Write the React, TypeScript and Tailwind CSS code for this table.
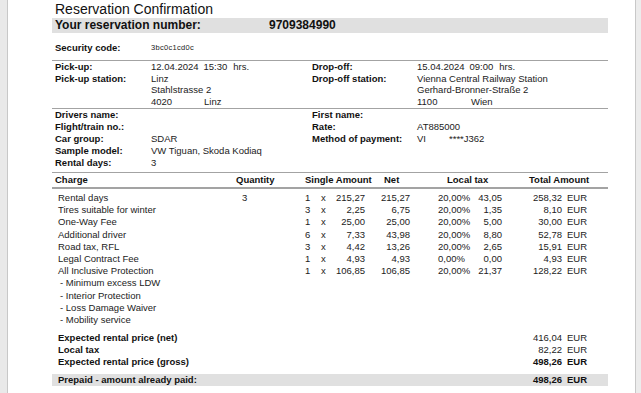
import React from 'react';

const pickup = {
  date: '12.04.2024',
  time: '15:30',
  station: 'Linz',
  street: 'Stahlstrasse 2',
  zip: '4020',
  city: 'Linz',
};

const dropoff = {
  date: '15.04.2024',
  time: '09:00',
  station: 'Vienna Central Railway Station',
  street: 'Gerhard-Bronner-Straße 2',
  zip: '1100',
  city: 'Wien',
};

const charges = [
  { name: 'Rental days', qty: '3', count: '1', single: '215,27', net: '215,27', pct: '20,00%', tax: '43,05', total: '258,32' },
  { name: 'Tires suitable for winter', qty: '', count: '3', single: '2,25', net: '6,75', pct: '20,00%', tax: '1,35', total: '8,10' },
  { name: 'One-Way Fee', qty: '', count: '1', single: '25,00', net: '25,00', pct: '20,00%', tax: '5,00', total: '30,00' },
  { name: 'Additional driver', qty: '', count: '6', single: '7,33', net: '43,98', pct: '20,00%', tax: '8,80', total: '52,78' },
  { name: 'Road tax, RFL', qty: '', count: '3', single: '4,42', net: '13,26', pct: '20,00%', tax: '2,65', total: '15,91' },
  { name: 'Legal Contract Fee', qty: '', count: '1', single: '4,93', net: '4,93', pct: '0,00%', tax: '0,00', total: '4,93' },
  { name: 'All Inclusive Protection', qty: '', count: '1', single: '106,85', net: '106,85', pct: '20,00%', tax: '21,37', total: '128,22' },
];

const protections = ['Minimum excess LDW', 'Interior Protection', 'Loss Damage Waiver', 'Mobility service'];

function Rule() {
  return <div className="h-[1.5px] bg-[#a3a3a3]" />;
}

function Field({ label, children }: { label: string; children?: React.ReactNode }) {
  return (
    <div className="flex">
      <div className="w-[105px] shrink-0 font-bold text-[#111]">{label}</div>
      <div className="flex">{children}</div>
    </div>
  );
}

export default function App() {
  return (
    <div className="flex h-[393px] w-[641px] overflow-hidden bg-white font-['Liberation_Sans',Arial,sans-serif] text-[9.5px] text-[#222]">
      <div className="w-[8px] shrink-0 border-r border-[#c8c8c8] bg-[#e9e9e9]" />

      <main className="flex-1 pl-[44px]">
        <div className="w-[556px]">
          <h1 className="h-[18px] px-[3px] text-[14px] leading-[18px] text-[#111]">Reservation Confirmation</h1>
          <div className="flex h-[15px] bg-[#e0e0e0] px-[3px] text-[12px] font-bold leading-[15px] text-[#111]">
            <span className="w-[214px]">Your reservation number:</span>
            <span>9709384990</span>
          </div>

          <div className="mt-[9px] flex h-[12px] items-center px-[3px] leading-[12px]">
            <span className="w-[96px] font-bold text-[#111]">Security code:</span>
            <span className="text-[7.5px] tracking-[0.3px]">3bc0c1cd0c</span>
          </div>

          <div className="mt-[5.5px]">
            <Rule />
          </div>

          {/* pick-up / drop-off */}
          <div className="flex px-[3px] leading-[11.7px]">
            <div className="w-[257px]">
              <div className="flex">
                <div className="w-[96px] font-bold text-[#111]">Pick-up:</div>
                <div>
                  {pickup.date}
                  <span className="ml-[5px]">{pickup.time}</span>
                  <span className="ml-[6px]">hrs.</span>
                </div>
              </div>
              <div className="flex">
                <div className="w-[96px] font-bold text-[#111]">Pick-up station:</div>
                <div>
                  <div>{pickup.station}</div>
                  <div>{pickup.street}</div>
                  <div className="flex">
                    <span className="w-[53px]">{pickup.zip}</span>
                    <span>{pickup.city}</span>
                  </div>
                </div>
              </div>
            </div>
            <div>
              <Field label="Drop-off:">
                {dropoff.date}
                <span className="ml-[5px]">{dropoff.time}</span>
                <span className="ml-[6px]">hrs.</span>
              </Field>
              <div className="flex">
                <div className="w-[105px] font-bold text-[#111]">Drop-off station:</div>
                <div>
                  <div>{dropoff.station}</div>
                  <div>{dropoff.street}</div>
                  <div className="flex">
                    <span className="w-[54px]">{dropoff.zip}</span>
                    <span>{dropoff.city}</span>
                  </div>
                </div>
              </div>
            </div>
          </div>

          <Rule />

          {/* driver / vehicle */}
          <div className="flex px-[3px] leading-[12px]">
            <div className="w-[257px]">
              {[
                ['Drivers name:', ''],
                ['Flight/train no.:', ''],
                ['Car group:', 'SDAR'],
                ['Sample model:', 'VW Tiguan, Skoda Kodiaq'],
                ['Rental days:', '3'],
              ].map(([label, value]) => (
                <div key={label} className="flex h-[12px]">
                  <div className="w-[96px] font-bold text-[#111]">{label}</div>
                  <div>{value}</div>
                </div>
              ))}
            </div>
            <div>
              <Field label="First name:" />
              <Field label="Rate:">AT885000</Field>
              <Field label="Method of payment:">
                <span className="w-[32px]">VI</span>
                <span>****J362</span>
              </Field>
            </div>
          </div>

          <div className="mt-[2.5px]">
            <Rule />
          </div>

          {/* charge table */}
          <div className="flex h-[14px] items-center font-bold leading-[14px] text-[#111]">
            <span className="w-[184px] pl-[3px]">Charge</span>
            <span className="w-[69px]">Quantity</span>
            <span className="w-[79px]">Single Amount</span>
            <span className="w-[63px]">Net</span>
            <span className="w-[82px]">Local tax</span>
            <span>Total Amount</span>
          </div>
          <Rule />

          <div className="pt-[3px] leading-[12.24px]">
            {charges.map((c) => (
              <div key={c.name} className="flex h-[12.24px]">
                <span className="w-[184px] pl-[6px]">{c.name}</span>
                <span className="w-[69px] pl-[6px]">{c.qty}</span>
                <span className="w-[14px]">{c.count}</span>
                <span className="w-[12px] pl-[2px]">x</span>
                <span className="w-[34px] text-right">{c.single}</span>
                <span className="w-[45px] text-right">{c.net}</span>
                <span className="w-[68px] pl-[28px]">{c.pct}</span>
                <span className="w-[24px] text-right">{c.tax}</span>
                <span className="w-[60px] text-right">{c.total}</span>
                <span className="pl-[5px]">EUR</span>
              </div>
            ))}
            {protections.map((p) => (
              <div key={p} className="h-[12.24px] pl-[8px]">
                - {p}
              </div>
            ))}
          </div>

          {/* totals */}
          <div className="mt-[5.5px] leading-[12px]">
            <div className="flex h-[12px]">
              <span className="w-[450px] pl-[6px] font-bold text-[#111]">Expected rental price (net)</span>
              <span className="w-[60px] text-right">416,04</span>
              <span className="pl-[5px]">EUR</span>
            </div>
            <div className="flex h-[12px]">
              <span className="w-[450px] pl-[6px] font-bold text-[#111]">Local tax</span>
              <span className="w-[60px] text-right">82,22</span>
              <span className="pl-[5px]">EUR</span>
            </div>
            <div className="flex h-[12px] font-bold text-[#111]">
              <span className="w-[450px] pl-[6px]">Expected rental price (gross)</span>
              <span className="w-[60px] text-right">498,26</span>
              <span className="pl-[5px]">EUR</span>
            </div>
          </div>

          <div className="mt-[6px] flex h-[12px] bg-[#e0e0e0] font-bold leading-[12px] text-[#111]">
            <span className="w-[450px] pl-[6px]">Prepaid - amount already paid:</span>
            <span className="w-[60px] text-right">498,26</span>
            <span className="pl-[5px]">EUR</span>
          </div>
        </div>
      </main>

      <div className="w-[6px] shrink-0 border-l border-[#c8c8c8] bg-[#ececec]" />
    </div>
  );
}
